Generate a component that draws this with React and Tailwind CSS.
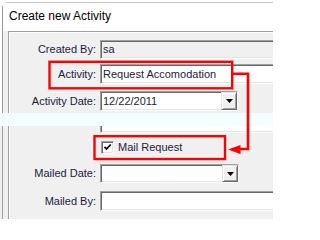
import React from "react";

const sunken =
  "border border-t-[#a0a0a0] border-l-[#a0a0a0] border-b-white border-r-white shadow-[inset_1px_1px_0_#696969,inset_-1px_-1px_0_#e3e3e3]";

function Label({ children }) {
  return (
    <div className="w-[86px] shrink-0 text-right text-[#1c1c3c] whitespace-nowrap">
      {children}
    </div>
  );
}

function TextBox({ value, readOnly, className }) {
  return (
    <div
      className={`${sunken} ${readOnly ? "bg-[#f0f0f0]" : "bg-white"} ml-[4px] w-[200px] shrink-0 flex items-center pl-[2px] text-[#1c1c3c] whitespace-nowrap ${className}`}
    >
      {value}
    </div>
  );
}

function Combo({ value, className }) {
  return (
    <div
      className={`${sunken} bg-white ml-[4px] shrink-0 flex items-stretch text-[#1c1c3c] ${className}`}
    >
      <div className="flex-1 flex items-center pl-[2px] whitespace-nowrap">{value}</div>
      <div className="w-[16px] border border-t-[#e3e3e3] border-l-[#e3e3e3] border-b-[#696969] border-r-[#696969] shadow-[inset_1px_1px_0_#fff,inset_-1px_-1px_0_#a0a0a0] bg-[#f0f0f0] flex items-center justify-center">
        <svg width="7" height="4" viewBox="0 0 7 4">
          <polygon points="0,0 7,0 3.5,4" fill="#000" />
        </svg>
      </div>
    </div>
  );
}

export default function App() {
  return (
    <div className="relative w-[273px] h-[219px] overflow-hidden bg-[#f0f0f0] font-['Liberation_Sans',Arial,sans-serif] text-[11px] leading-[13px]">
      {/* top section */}
      <div className="h-[113px] bg-white pt-[2px] pl-[2px]">
        <div className="h-full border-t border-l border-t-[#c4c4c4] border-l-[#9a9a9a] rounded-tl-[6px] flex flex-col">
          <div className="h-[28px] shrink-0 bg-white pl-[6px] pt-[6px] text-[12px] leading-[14px] text-black whitespace-nowrap">
            Create new Activity
          </div>
          <div className="flex-1 bg-[#f0f0f0] pl-[5px] flex">
            <div className="flex-1 border-t border-l border-[#a0a0a0]">
              <div className="h-full border-t border-l border-white flex flex-col">
                <div className="flex items-center mt-[7px]">
                  <Label>Created By:</Label>
                  <TextBox value="sa" readOnly className="h-[19px]" />
                </div>
                <div className="flex items-center mt-[5px]">
                  <Label>Activity:</Label>
                  <TextBox value="Request Accomodation" className="h-[20px]" />
                </div>
                <div className="flex items-center mt-[7px]">
                  <Label>Activity Date:</Label>
                  <Combo value="12/22/2011" className="w-[138px] h-[20px]" />
                </div>
              </div>
            </div>
          </div>
        </div>
      </div>

      {/* light band */}
      <div className="h-[13px] bg-[#f4fdfd]" />

      {/* lower section */}
      <div className="h-[93px] pl-[2px] flex">
        <div className="flex-1 border-l border-[#a0a0a0] pl-[5px] flex">
          <div className="flex-1 border-l border-[#a0a0a0]">
            <div className="h-full border-l border-white flex flex-col">
              <div className="ml-[90px] w-[200px] h-[7px] shrink-0 bg-white border-l border-b border-l-[#a0a0a0] border-b-white shadow-[inset_1px_0_0_#696969,inset_0_-1px_0_#e3e3e3]" />
              <div className="flex items-center mt-[8px] ml-[91px] h-[13px]">
                <div className={`${sunken} w-[13px] h-[13px] bg-white relative shrink-0`}>
                  <svg
                    className="absolute left-[1px] top-[1px]"
                    width="9"
                    height="9"
                    viewBox="0 0 9 9"
                  >
                    <path d="M1.5 3.8 L3.5 6 L7.8 1.5" stroke="#000" strokeWidth="1.8" fill="none" />
                  </svg>
                </div>
                <div className="ml-[4px] text-[#1c1c3c] whitespace-nowrap">Mail Request</div>
              </div>
              <div className="flex items-center mt-[10px]">
                <Label>Mailed Date:</Label>
                <Combo value="" className="w-[139px] h-[19px]" />
              </div>
              <div className="flex items-center mt-[8px]">
                <Label>Mailed By:</Label>
                <TextBox value="" className="h-[20px]" />
              </div>
            </div>
          </div>
        </div>
      </div>

      {/* red annotations */}
      <svg
        className="absolute inset-0 pointer-events-none"
        width="273"
        height="219"
        viewBox="0 0 273 219"
      >
        <rect x="49.5" y="61.8" width="182.7" height="26.5" stroke="#ff0000" strokeWidth="2.4" fill="none" />
        <rect x="94.5" y="136.2" width="130.5" height="22.8" stroke="#ff0000" strokeWidth="2.4" fill="none" />
        <path d="M232 73.8 H248 V149 H238" stroke="#ff0000" strokeWidth="2.6" fill="none" />
        <polygon points="228,149.5 240.5,145 240.5,154" fill="#ff0000" />
      </svg>
    </div>
  );
}
